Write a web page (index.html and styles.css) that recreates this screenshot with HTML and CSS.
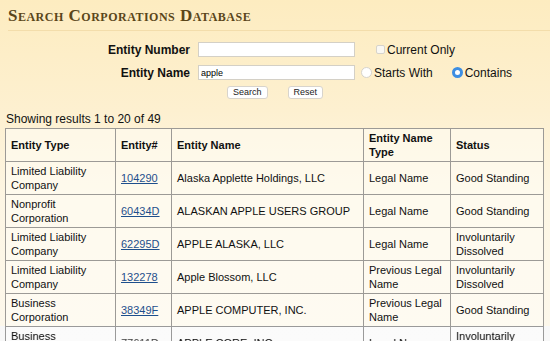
FILE: index.html
```html
<!DOCTYPE html>
<html lang="en">
<head>
  <meta charset="UTF-8" />
  <title>Search Corporations Database</title>
  <link rel="stylesheet" href="styles.css">
</head>
<body>

<div class="page">
  <h1 class="page-title">Search Corporations Database</h1>

  <form class="search-form">
    <div class="form-row">
      <label class="field-label" for="entity-number">Entity Number</label>
      <input type="text" id="entity-number" class="text-input">
      <label class="opt opt-current"><input type="checkbox" class="check">Current Only</label>
    </div>
    <div class="form-row">
      <label class="field-label" for="entity-name">Entity Name</label>
      <input type="text" id="entity-name" class="text-input" value="apple">
      <label class="opt opt-starts"><input type="radio" name="match" class="radio">Starts With</label>
      <label class="opt opt-contains"><input type="radio" name="match" class="radio" checked>Contains</label>
    </div>
    <div class="form-buttons">
      <button type="button" class="btn">Search</button>
      <button type="button" class="btn">Reset</button>
    </div>
  </form>

  <div class="results-count">Showing results 1 to 20 of 49</div>

  <table class="results">
    <thead>
      <tr>
        <th class="col-type">Entity Type</th>
        <th class="col-num">Entity#</th>
        <th class="col-name">Entity Name</th>
        <th class="col-nametype">Entity Name Type</th>
        <th class="col-status">Status</th>
      </tr>
    </thead>
    <tbody>
      <tr>
        <td>Limited Liability Company</td>
        <td><a href="#">104290</a></td>
        <td>Alaska Applette Holdings, LLC</td>
        <td>Legal Name</td>
        <td>Good Standing</td>
      </tr>
      <tr>
        <td>Nonprofit Corporation</td>
        <td><a href="#">60434D</a></td>
        <td>ALASKAN APPLE USERS GROUP</td>
        <td>Legal Name</td>
        <td>Good Standing</td>
      </tr>
      <tr>
        <td>Limited Liability Company</td>
        <td><a href="#">62295D</a></td>
        <td>APPLE ALASKA, LLC</td>
        <td>Legal Name</td>
        <td>Involuntarily Dissolved</td>
      </tr>
      <tr>
        <td>Limited Liability Company</td>
        <td><a href="#">132278</a></td>
        <td>Apple Blossom, LLC</td>
        <td>Previous Legal Name</td>
        <td>Involuntarily Dissolved</td>
      </tr>
      <tr>
        <td>Business Corporation</td>
        <td><a href="#">38349F</a></td>
        <td>APPLE COMPUTER, INC.</td>
        <td>Previous Legal Name</td>
        <td>Good Standing</td>
      </tr>
      <tr>
        <td>Business Corporation</td>
        <td><a href="#">77611D</a></td>
        <td>APPLE CORE, INC.</td>
        <td>Legal Name</td>
        <td>Involuntarily Dissolved</td>
      </tr>
    </tbody>
  </table>
</div>

<div class="bottom-fade"></div>

</body>
</html>
```

FILE: styles.css
```css
html, body {
  margin: 0;
  height: 100%;
  overflow: hidden;
}
body {
  font-family: "Liberation Sans", Arial, sans-serif;
  color: #111;
  background: linear-gradient(180deg, #fdecc0 0px, #fdf0d0 110px, #fdf6e4 200px, #fdf8ec 341px);
}
.page-title {
  margin: 0 0 0 8px;
  padding-top: 7px;
  padding-bottom: 5px;
  font-family: "Liberation Serif", "Times New Roman", serif;
  font-variant: small-caps;
  font-weight: bold;
  font-size: 17px;
  line-height: 18px;
  letter-spacing: 0.5px;
  color: #5a461a;
  border-bottom: 1px solid #f3ddab;
}
.search-form {
  margin-top: 11px;
}
.form-row {
  display: flex;
  align-items: center;
  height: 15px;
  margin-bottom: 8px;
}
.field-label {
  width: 190px;
  text-align: right;
  font-weight: bold;
  font-size: 12px;
  margin-right: 8px;
}
.text-input {
  box-sizing: border-box;
  width: 157px;
  height: 15px;
  margin: 0;
  padding: 0 2px;
  border: 1px solid #d4d0c6;
  background: #fff;
  font-family: "Liberation Sans", Arial, sans-serif;
  font-size: 9px;
  outline: none;
}
.opt {
  display: flex;
  align-items: center;
  font-size: 12px;
}
.opt-current {
  margin-left: 21px;
}
.opt-starts {
  margin-left: 6px;
}
.opt-contains {
  margin-left: 19px;
}
.check {
  appearance: none;
  width: 9px;
  height: 9px;
  margin: 0 2px 0 0;
  border: 1px solid #d6d3cc;
  border-radius: 2px;
  background: #faf8f3;
}
.radio {
  appearance: none;
  box-sizing: border-box;
  width: 11px;
  height: 11px;
  margin: 0 2px 0 0;
  border: 1px solid #d6d3cc;
  border-radius: 50%;
  background: #fff;
}
.radio:checked {
  border: 3px solid #3d8ee2;
  background: #fff;
}
.form-buttons {
  display: flex;
  justify-content: center;
  gap: 20px;
  margin-top: -2px;
}
.btn {
  height: 13px;
  padding: 0 5px;
  font-family: "Liberation Sans", Arial, sans-serif;
  font-size: 9px;
  line-height: 11px;
  color: #222;
  background: #fff;
  border: 1px solid #d8d4cc;
  border-radius: 3px;
}
.results-count {
  margin: 13px 0 0 6px;
  font-size: 12px;
  line-height: 14px;
}
.results {
  margin: 2px 0 0 5px;
  width: 539px;
  border-collapse: collapse;
  font-size: 11px;
  line-height: 14px;
}
.results th,
.results td {
  border: 1px solid #9c9a96;
  padding: 2px 5px 2px 5px;
  height: 28px;
  text-align: left;
  vertical-align: middle;
  background: rgba(255, 253, 246, 0.55);
}
.results th {
  font-weight: bold;
}
.col-type { width: 99px; }
.col-num { width: 45px; }
.col-name { width: 181px; }
.col-nametype { width: 76px; }
.col-status { width: 82px; }
.results a {
  color: #1e4f8c;
}
.bottom-fade {
  position: fixed;
  left: 0;
  right: 0;
  bottom: 0;
  height: 15px;
  background: #eee;
  mix-blend-mode: saturation;
}
```
